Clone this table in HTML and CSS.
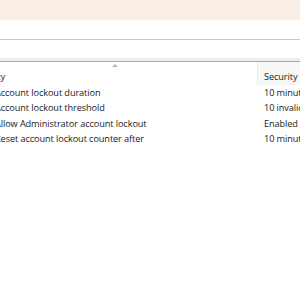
FILE: index.html
```html
<!DOCTYPE html>
<html>
<head>
<meta charset="utf-8">
<link rel="stylesheet" href="styles.css">
</head>
<body>
<div class="topband"></div>
<div class="toolbar"></div>
<div class="pane">
  <div class="gap"></div>
  <div class="strip"></div>
  <div class="table">
    <div class="head">
      <div class="hcell policy">Policy<span class="sort"></span></div>
      <div class="hcell setting">Security Setting</div>
    </div>
    <div class="row"><div class="name">Account lockout duration</div><div class="val">10 minutes</div></div>
    <div class="row"><div class="name">Account lockout threshold</div><div class="val">10 invalid logon attempts</div></div>
    <div class="row"><div class="name">Allow Administrator account lockout</div><div class="val">Enabled</div></div>
    <div class="row"><div class="name">Reset account lockout counter after</div><div class="val">10 minutes</div></div>
  </div>
</div>
</body>
</html>
```
FILE: styles.css
```css
html, body { margin: 0; padding: 0; background: #fff; }
body {
  font-family: "Open Sans", "Noto Sans", sans-serif;
  font-size: 9.2px;
  letter-spacing: -0.1px;
  color: #1b1b1b;
  width: 300px;
  height: 300px;
  overflow: hidden;
}
.pane { overflow: hidden; }
.topband { height: 20px; background: #f9efe6; }
.toolbar { height: 19px; border-bottom: 1px solid #c9c9c9; background: #fff; }
.gap { height: 18px; }
.strip { height: 3px; background: #ededed; border-bottom: 1px solid #a9a9a9; }
.table { margin-left: -28px; width: 400px; }
.head { display: grid; grid-template-columns: 285px 1fr; height: 23px; }
.hcell { position: relative; display: flex; align-items: center; padding-left: 9px; padding-top: 5px; white-space: nowrap; }
.hcell.setting { background: #f7f7f7; border-left: 1px solid #ececec; padding-left: 6px; }
.sort {
  position: absolute; left: 140px; top: 2px;
  width: 0; height: 0;
  border-left: 3px solid transparent; border-right: 3px solid transparent;
  border-bottom: 3px solid #b5b5b5;
}
.row { display: grid; grid-template-columns: 285px 1fr; height: 15.3px; align-items: center; }
.name { padding-left: 23px; white-space: nowrap; }
.val { padding-left: 7px; white-space: nowrap; }
```
